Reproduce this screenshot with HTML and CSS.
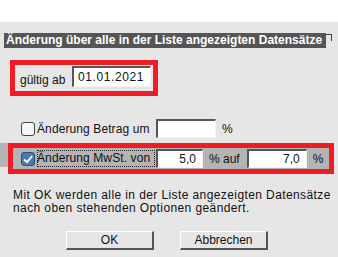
FILE: index.html
```html
<!DOCTYPE html>
<html lang="de">
<head>
    <meta charset="UTF-8">
    <title>Änderung</title>
    <link rel="stylesheet" href="styles.css">
</head>
<body>
<div class="topbar"></div>
<main class="dialog">
    <div class="title-row">
        <span class="title">Änderung über alle in der Liste angezeigten Datensätze</span>
        <span class="corner"></span>
    </div>

    <!-- Datum -->
    <div class="mark date-box">
        <span class="label">gültig ab</span>
        <div class="field date-field">01.01.2021</div>
    </div>

    <!-- Betrag -->
    <div class="row">
        <span class="check"></span>
        <span class="label">Änderung Betrag um</span>
        <div class="field amount-field"></div>
        <span class="unit">%</span>
    </div>

    <!-- MwSt -->
    <div class="sel-band">
        <div class="mark vat-box">
            <span class="check checked">
                <svg viewBox="0 0 14 14" width="14" height="14">
                    <path d="M3 7.5 L6 10.2 L11.2 4" stroke="#fff" stroke-width="1.8" fill="none"/>
                </svg>
            </span>
            <span class="label focus">Änderung MwSt. von</span>
            <div class="field vat-from">5,0</div>
            <span class="unit">% auf</span>
            <div class="field vat-to">7,0</div>
            <span class="unit">%</span>
        </div>
    </div>

    <p class="note">Mit OK werden alle in der Liste angezeigten Datensätze<br>nach oben stehenden Optionen geändert.</p>

    <div class="buttons">
        <button>OK</button>
        <button>Abbrechen</button>
    </div>
</main>
</body>
</html>
```

FILE: styles.css
```css
body {
    margin: 0;
    font-family: "Liberation Sans", Arial, sans-serif;
    font-size: 12px;
    color: #111;
    background: #e6e6e6;
    height: 257px;
    overflow: hidden;
}

.topbar {
    height: 22px;
    background: #fff;
}

.dialog {
    padding: 0;
}

.title-row {
    display: flex;
    align-items: flex-start;
    margin: 11px 0 0 4px;
    height: 15px;
}

.title {
    background: #555;
    color: #fff;
    font-weight: bold;
    font-size: 12px;
    line-height: 15px;
    padding: 0 4px 0 2px;
    white-space: nowrap;
}

.corner {
    width: 5px;
    height: 6px;
    margin-top: 1px;
    border-top: 1px solid #444;
    border-right: 1px solid #444;
}

.mark {
    border: 5px solid #ee1c24;
}

.date-box {
    display: flex;
    align-items: flex-start;
    width: 138px;
    height: 26px;
    margin: 12px 0 0 10px;
}

.date-box .label {
    margin: 8px 0 0 5px;
    width: 52px;
}

.field {
    box-sizing: border-box;
    background: #fff;
    border-top: 2px solid #555;
    border-left: 2px solid #555;
    border-right: 1px solid #f4f4f4;
    border-bottom: 1px solid #f4f4f4;
    line-height: 16px;
    padding: 0 4px;
}

.date-field {
    width: 79px;
    height: 21px;
    margin-top: 1px;
    padding-top: 1px;
    letter-spacing: 0.6px;
}

.row {
    display: flex;
    align-items: center;
    margin: 23px 0 0 21px;
    height: 19px;
}

.check {
    box-sizing: border-box;
    width: 14px;
    height: 14px;
    border: 1px solid #444;
    border-radius: 3px;
    background: #f6f6f6;
    margin-right: 2px;
}

.check.checked {
    background: #4a79b2;
    border-color: #2f4f7a;
}

.check svg {
    display: block;
    margin: -1px 0 0 -1px;
}

.row .label {
    width: 119px;
    letter-spacing: 0.1px;
}

.amount-field {
    width: 60px;
    height: 19px;
}

.unit {
    margin-left: 6px;
}

.sel-band {
    background: #b4b4b4;
    margin: 8px 8px 0 0;
    padding-left: 8px;
    height: 24px;
}

.vat-box {
    display: flex;
    align-items: center;
    background: #b4b4b4;
    height: 21px;
    margin-top: -3px;
    margin-right: -4px;
    padding-left: 8px;
}

.focus {
    outline: 1px dotted #222;
    outline-offset: -1px;
    width: 118px;
    height: 17px;
    line-height: 17px;
    margin-right: 1px;
    letter-spacing: 0.1px;
}

.vat-from, .vat-to {
    height: 19px;
    text-align: right;
    padding-right: 6px;
    line-height: 17px;
}

.vat-from {
    width: 47px;
}

.vat-to {
    width: 60px;
    margin-left: 7px;
}

.note {
    margin: 22px 0 0 13px;
    line-height: 13px;
    letter-spacing: 0.4px;
}

.buttons {
    display: flex;
    gap: 26px;
    margin: 16px 0 0 66px;
}

button {
    font-family: inherit;
    font-size: 12px;
    color: #111;
    width: 88px;
    height: 19px;
    padding: 0;
    background: #e6e6e6;
    border-top: 1px solid #fff;
    border-left: 1px solid #fff;
    border-right: 2px solid #555;
    border-bottom: 2px solid #555;
}
```
